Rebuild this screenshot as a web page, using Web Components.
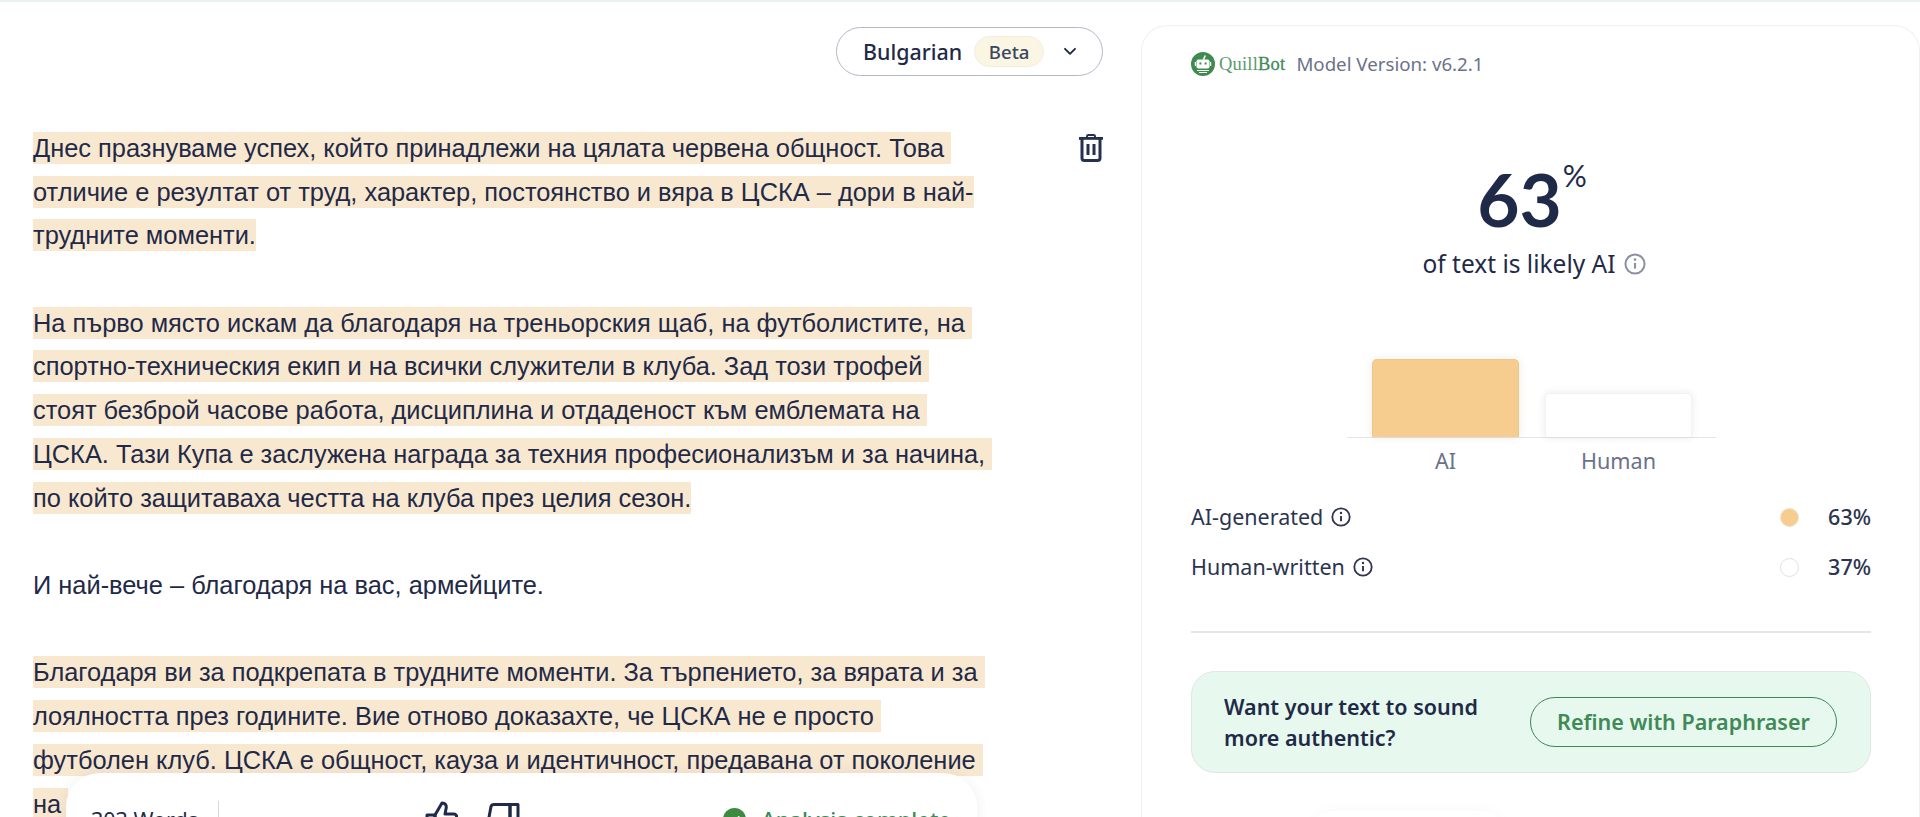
<!doctype html>
<html lang="en">
<head>
<meta charset="utf-8">
<title>AI Detector</title>
<style>
  html, body { margin: 0; height: 817px; overflow: hidden; background: #fff; }
</style>
</head>
<body>
<detector-page></detector-page>

<script>
const INK = "#1f2a48";

const INFO_ICON = (size, color) => `
  <svg width="${size}" height="${size}" viewBox="0 0 20 20" fill="none" stroke="${color}" stroke-width="1.8" style="display:block;flex:none">
    <circle cx="10" cy="10" r="8.7"/>
    <path d="M10 9v5.2" stroke-width="1.9"/>
    <circle cx="10" cy="6" r="1.2" fill="${color}" stroke="none"/>
  </svg>`;

class LanguagePill extends HTMLElement {
    connectedCallback() {
        this.attachShadow({ mode: "open" }).innerHTML = `
            <style>
                :host {
                    display: flex;
                    align-items: center;
                    box-sizing: border-box;
                    width: 267px;
                    height: 49px;
                    padding-left: 26px;
                    border: 1.5px solid #b4b8c8;
                    border-radius: 25px;
                    font: 500 21.4px "Noto Sans", sans-serif;
                    color: ${INK};
                }
                #beta {
                    display: flex;
                    align-items: center;
                    justify-content: center;
                    box-sizing: border-box;
                    width: 70px;
                    height: 31px;
                    margin-left: 12px;
                    background: #fbf6e3;
                    border: 1px solid #f2eed9;
                    border-radius: 16px;
                    font-size: 18.6px;
                    font-weight: 500;
                    color: #3a4560;
                }
                svg { margin-left: 19px; }
            </style>
            <span><slot></slot></span>
            <span id="beta">Beta</span>
            <svg width="14" height="9" viewBox="0 0 14 9" fill="none" stroke="${INK}" stroke-width="1.9" stroke-linecap="round" stroke-linejoin="round">
                <path d="M2 1.8l5 5 5-5"/>
            </svg>
        `;
    }
}

class TextLine extends HTMLElement {
    connectedCallback() {
        const plain = this.hasAttribute("plain");
        this.attachShadow({ mode: "open" }).innerHTML = `
            <style>
                :host {
                    display: block;
                    height: 43.72px;
                    line-height: 43.72px;
                }
                mark {
                    padding: 2px 0;
                    white-space: pre;
                    color: inherit;
                    background: ${plain ? "transparent" : "#f9e8d0"};
                }
            </style>
            <mark><slot></slot></mark>
        `;
    }
}

class TextPanel extends HTMLElement {
    connectedCallback() {
        this.attachShadow({ mode: "open" }).innerHTML = `
            <style>
                :host {
                    display: flex;
                    justify-content: space-between;
                    margin-top: 50.8px;
                    font: 25.4px "Liberation Sans", Arial, sans-serif;
                    color: ${INK};
                }
                svg { display: block; flex: none; margin-top: 7.2px; }
            </style>
            <div id="text"><slot></slot></div>
            <svg width="24" height="28" viewBox="0 0 24 28" fill="none" stroke="#24314f" stroke-width="3">
                <path d="M0 4.4h24" stroke-width="2.8"/>
                <path d="M8 3.4V2.2C8 1.4 8.6 1 9.4 1h5.2c.8 0 1.4.4 1.4 1.2v1.2" stroke-width="2"/>
                <path d="M3 5v19c0 1.4.8 2.4 2.4 2.4h13.2c1.6 0 2.4-1 2.4-2.4V5"/>
                <path d="M9 10v11M15 10v11"/>
            </svg>
        `;
    }
}

class StatusBar extends HTMLElement {
    connectedCallback() {
        this.attachShadow({ mode: "open" }).innerHTML = `
            <style>
                :host {
                    position: absolute;
                    left: 66px;
                    top: 771px;
                    box-sizing: border-box;
                    display: flex;
                    width: 911px;
                    height: 90px;
                    padding: 28px 26px 0 25px;
                    background: #fff;
                    border-radius: 34px;
                    box-shadow: 0 0 14px rgba(30, 40, 70, .07);
                    font: 21.5px "Noto Sans", sans-serif;
                    color: ${INK};
                }
                #words {
                    height: 40px;
                    padding: 5px 20px 0 0;
                    border-right: 1.5px solid #d5d8e0;
                    line-height: 1.3;
                    white-space: nowrap;
                }
                #votes {
                    display: flex;
                    gap: 29px;
                    margin-left: 206px;
                }
                #status {
                    display: flex;
                    align-items: flex-start;
                    gap: 15px;
                    margin-left: auto;
                    padding-top: 4px;
                    font-size: 22px;
                    font-weight: 500;
                    color: #3d8a52;
                    line-height: 1.3;
                }
            </style>
            <div id="words">303 Words</div>
            <div id="votes">
                <svg width="33" height="34" viewBox="0 0 33 34" fill="none" stroke="${INK}" stroke-width="3" stroke-linejoin="round">
                    <path d="M10 14L17 2c3 0 5 2 4 6l-1 5h9c2 0 3 2 2.5 4L29 29c-.4 1.4-1.500 2-3 2H10z"/>
                    <path d="M2 14h8v17H2z"/>
                </svg>
                <svg width="33" height="34" viewBox="0 0 33 34" fill="none" stroke="${INK}" stroke-width="3" stroke-linejoin="round" style="margin-top:2px">
                    <path d="M23 20l-7 12c-3 0-5-2-4-6l1-5H4c-2 0-3-2-2.500-4L4 3.500C4.400 2.100 5.500 1.500 7 1.500h16z"/>
                    <path d="M23 1.500h8V20h-8z"/>
                </svg>
            </div>
            <div id="status">
                <svg width="23" height="23" viewBox="0 0 23 23" style="margin-top:3px;flex:none">
                    <circle cx="11.500" cy="11.500" r="11.500" fill="#3d8a40"/>
                    <path d="M6.500 12l3.500 3.500 6.500-7" fill="none" stroke="#fff" stroke-width="2.400"/>
                </svg>
                <span>Analysis complete</span>
            </div>
        `;
    }
}

class CardHeader extends HTMLElement {
    connectedCallback() {
        this.attachShadow({ mode: "open" }).innerHTML = `
            <style>
                :host {
                    display: flex;
                    align-items: center;
                    height: 24px;
                    font: 18.7px "Noto Sans", sans-serif;
                    color: #6b7288;
                }
                #brand {
                    margin: 0 11px 0 4px;
                    font: 18.5px "Liberation Serif", serif;
                    letter-spacing: .2px;
                    color: #5a9a6c;
                }
                b { font-weight: 400; color: #478a5a; -webkit-text-stroke: .3px #478a5a; }
                #model { margin-top: -2px; }
            </style>
            <svg width="24" height="24" viewBox="0 0 24 24" style="flex:none">
                <circle cx="12" cy="12" r="12" fill="#3f8a4f"/>
                <path d="M12.500 7.500l1.800-4" stroke="#fff" stroke-width="1.600" fill="none"/>
                <rect x="5.500" y="7.500" width="13" height="9" rx="1.800" fill="#fff"/>
                <rect x="3.800" y="10" width="1.200" height="4" fill="#fff"/>
                <rect x="19" y="10" width="1.200" height="4" fill="#fff"/>
                <rect x="8.400" y="10.500" width="2" height="2" fill="#3f8a4f"/>
                <rect x="13.600" y="10.500" width="2" height="2" fill="#3f8a4f"/>
                <path d="M6 18.500h12M8 20.500h8" stroke="#fff" stroke-width="1" fill="none"/>
            </svg>
            <span id="brand">Quill<b>Bot</b></span>
            <span id="model">Model Version: v6.2.1</span>
        `;
    }
}

class ScoreHeadline extends HTMLElement {
    connectedCallback() {
        this.attachShadow({ mode: "open" }).innerHTML = `
            <style>
                :host {
                    display: flex;
                    flex-direction: column;
                    align-items: center;
                    margin-top: 79px;
                    color: ${INK};
                }
                #score {
                    display: flex;
                    align-items: flex-start;
                    height: 80px;
                    margin-left: 2px;
                    font: 700 73px/88px Lato, sans-serif;
                }
                #pct {
                    margin: 0 0 0 1px;
                    font: 400 30px/40px Lato, sans-serif;
                }
                #caption {
                    display: flex;
                    align-items: center;
                    gap: 8px;
                    margin: 14px 0 0 6px;
                    font: 24.5px/30px "Noto Sans", sans-serif;
                }
            </style>
            <div id="score"><span>63</span><span id="pct">%</span></div>
            <div id="caption"><span>of text is likely AI</span>${INFO_ICON(22, "#8a90a2")}</div>
        `;
    }
}

class ScoreChart extends HTMLElement {
    connectedCallback() {
        this.attachShadow({ mode: "open" }).innerHTML = `
            <style>
                :host {
                    display: block;
                    width: 369px;
                    margin: 80px 0 0 156px;
                    font: 21.6px "Noto Sans", sans-serif;
                    color: #6b7288;
                }
                #plot {
                    display: flex;
                    align-items: flex-end;
                    gap: 26px;
                    height: 78px;
                    padding-left: 25px;
                    border-bottom: 1.5px solid #e3e5e9;
                }
                .bar {
                    width: 147px;
                    box-sizing: border-box;
                    border-radius: 5px 5px 0 0;
                }
                #ai { height: 78px; background: #f6cd8f; border: 1px solid #eec78c; border-bottom: 0; box-shadow: 0 0 8px rgba(120, 110, 90, .14); }
                #human { height: 44px; background: #fff; border: 1px solid #f1f2f4; border-bottom: 0; box-shadow: 0 0 8px rgba(40, 50, 80, .1); }
                #labels {
                    display: flex;
                    gap: 26px;
                    padding: 9px 0 0 25px;
                    line-height: 28px;
                    text-align: center;
                }
                #labels span { width: 147px; }
            </style>
            <div id="plot"><div class="bar" id="ai"></div><div class="bar" id="human"></div></div>
            <div id="labels"><span>AI</span><span>Human</span></div>
        `;
    }
}

class ScoreRow extends HTMLElement {
    connectedCallback() {
        const filled = this.hasAttribute("filled");
        this.attachShadow({ mode: "open" }).innerHTML = `
            <style>
                :host {
                    display: flex;
                    align-items: center;
                    height: 30px;
                    font: 21.5px/30px "Noto Sans", sans-serif;
                    color: #2b3550;
                }
                svg { margin-left: 8px; }
                #dot {
                    box-sizing: border-box;
                    width: 19px;
                    height: 19px;
                    margin-left: auto;
                    border-radius: 50%;
                    background: ${filled ? "#f6cd8f" : "#fff"};
                    border: 1px solid ${filled ? "#eee2cc" : "#dfe2e6"};
                }
                #val {
                    width: 44px;
                    margin-left: 28px;
                    text-align: right;
                    font-weight: 500;
                }
            </style>
            <span>${this.getAttribute("label")}</span>
            ${INFO_ICON(20, "#2b3550")}
            <span id="dot"></span>
            <span id="val">${this.getAttribute("value")}</span>
        `;
    }
}

class ParaphraseCta extends HTMLElement {
    connectedCallback() {
        this.attachShadow({ mode: "open" }).innerHTML = `
            <style>
                :host {
                    display: flex;
                    align-items: center;
                    justify-content: space-between;
                    box-sizing: border-box;
                    height: 102px;
                    padding: 0 33px 0 32px;
                    background: #e7f8ee;
                    border: 1.5px solid #dfe8e4;
                    border-radius: 24px;
                    font: 600 21.5px/31px "Noto Sans", sans-serif;
                    color: ${INK};
                }
                #btn {
                    display: flex;
                    align-items: center;
                    justify-content: center;
                    box-sizing: border-box;
                    width: 307px;
                    height: 50px;
                    border: 1.5px solid #3f8556;
                    border-radius: 25px;
                    color: #3f8a56;
                }
            </style>
            <div>Want your text to sound<br>more authentic?</div>
            <div id="btn">Refine with Paraphraser</div>
        `;
    }
}

class ResultCard extends HTMLElement {
    connectedCallback() {
        this.attachShadow({ mode: "open" }).innerHTML = `
            <style>
                :host {
                    display: block;
                    position: relative;
                    box-sizing: border-box;
                    width: 779px;
                    height: 792px;
                    flex: none;
                    margin-top: 23px;
                    padding: 26px 48px 0 49px;
                    background: #fff;
                    border: 1.5px solid #eff0f2;
                    border-bottom: 0;
                    border-radius: 26px 26px 0 0;
                }
                /* something scrolled below the fold casts this faint shadow */
                #ghost {
                    position: absolute;
                    left: 170px;
                    top: 785px;
                    width: 190px;
                    height: 40px;
                    border-radius: 30px;
                    box-shadow: 0 0 16px rgba(30, 40, 70, .03);
                }
            </style>
            <slot></slot>
            <div id="ghost"></div>
        `;
    }
}

class DetectorPage extends HTMLElement {
    connectedCallback() {
        const lines = [
            "Днес празнуваме успех, който принадлежи на цялата червена общност. Това ",
            "отличие е резултат от труд, характер, постоянство и вяра в ЦСКА – дори в най-",
            "трудните моменти.",
            null,
            "На първо място искам да благодаря на треньорския щаб, на футболистите, на ",
            "спортно-техническия екип и на всички служители в клуба. Зад този трофей ",
            "стоят безброй часове работа, дисциплина и отдаденост към емблемата на ",
            "ЦСКА. Тази Купа е заслужена награда за техния професионализъм и за начина, ",
            "по който защитаваха честта на клуба през целия сезон.",
            null,
            "!И най-вече – благодаря на вас, армейците.",
            null,
            "Благодаря ви за подкрепата в трудните моменти. За търпението, за вярата и за ",
            "лоялността през годините. Вие отново доказахте, че ЦСКА не е просто ",
            "футболен клуб. ЦСКА е общност, кауза и идентичност, предавана от поколение ",
            "на ",
        ];
        const rows = lines.map((l) => {
            if (l === null) return `<text-line plain> </text-line>`;
            if (l[0] === "!") return `<text-line plain>${l.slice(1)}</text-line>`;
            return `<text-line>${l}</text-line>`;
        }).join("");

        this.attachShadow({ mode: "open" }).innerHTML = `
            <style>
                :host {
                    display: block;
                    position: relative;
                    width: 1920px;
                    height: 817px;
                    overflow: hidden;
                    background: #fff;
                    border-top: 2px solid #e8f4ee;
                    box-sizing: border-box;
                }
                #cols { display: flex; }
                #left { flex: 1; padding: 25px 38px 0 33px; min-width: 0; }
                #pillrow { display: flex; justify-content: flex-end; }
                #rows { display: flex; flex-direction: column; gap: 20px; margin-top: 27px; }
                #rule { height: 1.5px; margin: 49px 0 38px; background: #e3e5e9; }
            </style>
            <div id="cols">
                <div id="left">
                    <div id="pillrow"><language-pill>Bulgarian</language-pill></div>
                    <text-panel>${rows}</text-panel>
                </div>
                <result-card>
                    <card-header></card-header>
                    <score-headline></score-headline>
                    <score-chart></score-chart>
                    <div id="rows">
                        <score-row filled label="AI-generated" value="63%"></score-row>
                        <score-row label="Human-written" value="37%"></score-row>
                    </div>
                    <div id="rule"></div>
                    <paraphrase-cta></paraphrase-cta>
                </result-card>
            </div>
            <status-bar></status-bar>
        `;
    }
}

customElements.define("language-pill", LanguagePill);
customElements.define("text-line", TextLine);
customElements.define("text-panel", TextPanel);
customElements.define("status-bar", StatusBar);
customElements.define("card-header", CardHeader);
customElements.define("score-headline", ScoreHeadline);
customElements.define("score-chart", ScoreChart);
customElements.define("score-row", ScoreRow);
customElements.define("paraphrase-cta", ParaphraseCta);
customElements.define("result-card", ResultCard);
customElements.define("detector-page", DetectorPage);
</script>
</body>
</html>
